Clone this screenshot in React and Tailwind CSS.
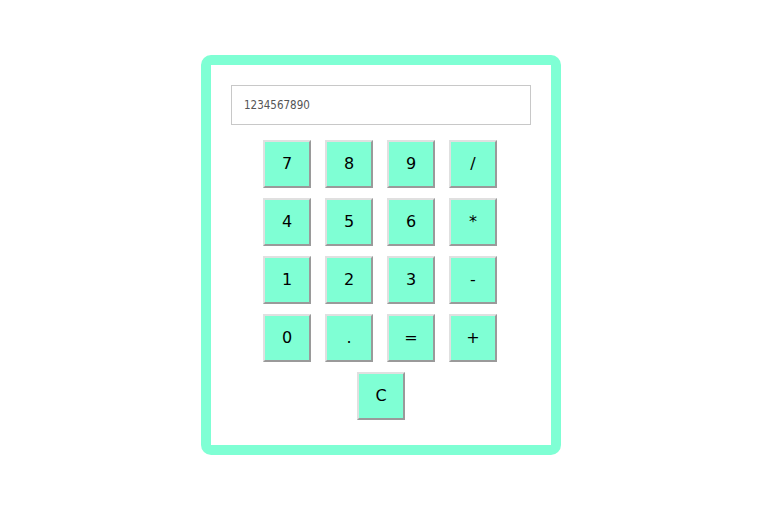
import React, { useState } from "react";

const KEYS = ["7", "8", "9", "/", "4", "5", "6", "*", "1", "2", "3", "-", "0", ".", "=", "+"];

const Key = ({ label, onClick }) => (
  <button
    onClick={onClick}
    className="w-[48px] h-[48px] bg-[#7fffd4] text-[16px] text-black border-2 border-t-[#e0e0e0] border-l-[#e0e0e0] border-b-[#9a9a9a] border-r-[#9a9a9a] flex items-center justify-center"
    style={{ fontFamily: '"DejaVu Sans", Verdana, sans-serif' }}
  >
    {label}
  </button>
);

export default function App() {
  const [value, setValue] = useState("");

  return (
    <div className="w-[781px] h-[518px] bg-white pt-[55px] pl-[201px]">
      <div className="w-[360px] h-[400px] border-[10px] border-[#7fffd4] rounded-[10px] px-[20px] pt-[20px] flex flex-col items-center">
        <input
          className="w-[300px] h-[40px] border border-[#c8c8c8] px-[12px] text-[11.5px] text-[#555] placeholder:text-[#555] outline-none"
          style={{ fontFamily: '"DejaVu Sans Condensed", "DejaVu Sans", sans-serif' }}
          placeholder="1234567890"
          value={value}
          onChange={(e) => setValue(e.target.value)}
        />
        <div className="mt-[15px] mr-[2px] grid grid-cols-4 gap-x-[14px] gap-y-[10px]">
          {KEYS.map((k) => (
            <Key key={k} label={k} onClick={() => setValue(value + k)} />
          ))}
        </div>
        <div className="mt-[10px]">
          <Key label="C" onClick={() => setValue("")} />
        </div>
      </div>
    </div>
  );
}
